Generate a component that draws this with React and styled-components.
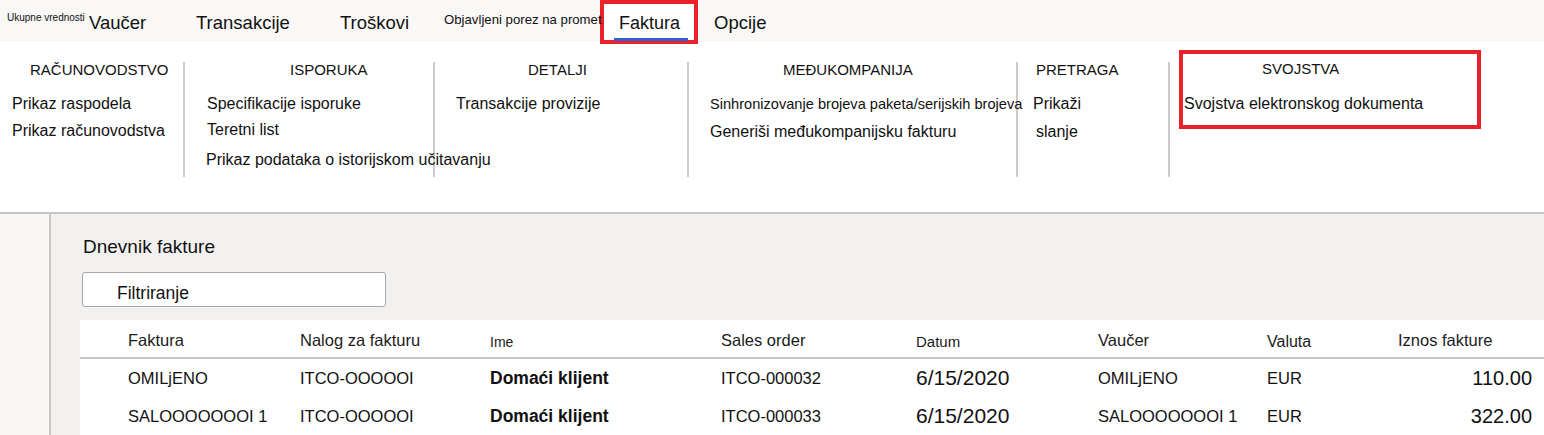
import React from 'react';
import styled, { createGlobalStyle } from 'styled-components';

const GlobalStyle = createGlobalStyle`
  html, body {
    margin: 0;
    padding: 0;
    background: #ffffff;
  }
  body {
    font-family: "Liberation Sans", Arial, sans-serif;
    color: #1b1b1b;
  }
`;

const Page = styled.div`
  width: 1544px;
  height: 435px;
  overflow: hidden;
  display: flex;
  flex-direction: column;
`;

// gornja traka sa karticama
const TabBar = styled.div`
  height: 42px;
  flex-shrink: 0;
  background: #f9f8f7;
  display: flex;
  align-items: flex-start;
  padding-left: 7px;
  position: relative;
  z-index: 2;
`;

const Tab = styled.div`
  width: ${p => p.$w}px;
  flex-shrink: 0;
  font-size: ${p => p.$size}px;
  line-height: ${p => p.$lh}px;
  padding-top: ${p => p.$top}px;
  white-space: nowrap;
  color: #111;
  position: relative;
  z-index: 1;
`;

const ActiveTab = styled.div`
  width: 98px;
  height: 44px;
  flex-shrink: 0;
  box-sizing: border-box;
  border: 4px solid #e8212b;
  background: #ffffff;
  margin-right: 16px;
`;

const ActiveLabel = styled.div`
  margin: 8px 6px 0 10px;
  padding: 0 0 4px 5px;
  font-size: 18px;
  line-height: 22px;
  color: #111;
  border-bottom: 3px solid #2f62d0;
`;

// ribbon sa grupama
const Ribbon = styled.div`
  height: 170px;
  flex-shrink: 0;
  background: #ffffff;
  border-bottom: 2px solid #c8c6c4;
  display: flex;
  align-items: flex-start;
`;

const Group = styled.div`
  width: ${p => p.$w}px;
  flex-shrink: 0;
  box-sizing: border-box;
  margin-top: 20px;
  height: 115px;
  border-right: 2px solid #cdcbc9;
  display: flex;
  flex-direction: column;
`;

const RedGroup = styled.div`
  width: 302px;
  height: 79px;
  box-sizing: border-box;
  margin: 8px 0 0 9px;
  padding-top: 7px;
  border: 4px solid #e8212b;
  display: flex;
  flex-direction: column;
`;

const GroupTitle = styled.div`
  font-size: 15px;
  line-height: 16px;
  padding-left: ${p => p.$x}px;
  color: #111;
  white-space: nowrap;
`;

const Action = styled.div`
  font-size: ${p => p.$size || 16}px;
  line-height: 24px;
  padding-left: ${p => p.$x}px;
  margin-top: ${p => p.$mt}px;
  color: #111;
  white-space: nowrap;
`;

// donji deo stranice
const Body = styled.div`
  flex: 1;
  display: flex;
  min-height: 0;
`;

const SidePanel = styled.div`
  width: 49px;
  flex-shrink: 0;
  background: #f8f7f6;
  border-right: 2px solid #c8c6c4;
`;

const Main = styled.div`
  flex: 1;
  background: #f2f1f0;
  padding: 23px 0 0 29px;
  display: flex;
  flex-direction: column;
  min-width: 0;
`;

const Title = styled.div`
  font-size: 19px;
  line-height: 20px;
  margin-left: 3px;
  color: #111;
`;

const Filter = styled.div`
  margin: 15px 0 0 2px;
  width: 304px;
  height: 35px;
  box-sizing: border-box;
  border: 1px solid #a8a8a8;
  border-radius: 3px;
  background: #ffffff;
  padding: 10px 0 0 34px;
  font-size: 17.5px;
  line-height: 20px;
  color: #111;
`;

const Grid = styled.div`
  flex: 1;
  margin-top: 13px;
  background: #ffffff;
`;

const columns = '48px 172px 190px 231px 195px 182px 169px 131px 1fr';

const HeadRow = styled.div`
  display: grid;
  grid-template-columns: ${columns};
  height: 37px;
  border-bottom: 2px solid #c8c6c4;
`;

const HeadCell = styled.div`
  font-size: ${p => p.$size || 16.5}px;
  line-height: 20px;
  padding-top: ${p => (p.$low ? 12 : 10)}px;
  color: #1b1b1b;
  white-space: nowrap;
`;

const Row = styled.div`
  display: grid;
  grid-template-columns: ${columns};
  height: 38px;
  align-items: center;
`;

const Cell = styled.div`
  font-size: ${p => p.$size || 16.5}px;
  font-weight: ${p => (p.$bold ? 700 : 400)};
  text-align: ${p => (p.$right ? 'right' : 'left')};
  padding-right: ${p => (p.$right ? 12 : 0)}px;
  color: #111;
  white-space: nowrap;
`;

const rows = [
  { faktura: 'OMILjENO', nalog: 'ITCO-OOOOOI', ime: 'Domaći klijent', so: 'ITCO-000032', datum: '6/15/2020', vaucer: 'OMILjENO', valuta: 'EUR', iznos: '110.00' },
  { faktura: 'SALOOOOOOOI 1', nalog: 'ITCO-OOOOOI', ime: 'Domaći klijent', so: 'ITCO-000033', datum: '6/15/2020', vaucer: 'SALOOOOOOOI 1', valuta: 'EUR', iznos: '322.00' },
];

export default function App() {
  return (
    <Page>
      <GlobalStyle />
      <TabBar>
        <Tab $w={82} $size={10} $lh={12} $top={12}>Ukupne vrednosti</Tab>
        <Tab $w={107} $size={18.5} $lh={22} $top={12}>Vaučer</Tab>
        <Tab $w={144} $size={18.5} $lh={22} $top={12}>Transakcije</Tab>
        <Tab $w={104} $size={18.5} $lh={22} $top={12}>Troškovi</Tab>
        <Tab $w={156} $size={13.2} $lh={16} $top={12}>Objavljeni porez na promet</Tab>
        <ActiveTab>
          <ActiveLabel>Faktura</ActiveLabel>
        </ActiveTab>
        <Tab $w={80} $size={18.5} $lh={22} $top={12}>Opcije</Tab>
      </TabBar>

      <Ribbon>
        <Group $w={185}>
          <GroupTitle $x={30}>RAČUNOVODSTVO</GroupTitle>
          <Action $x={12} $mt={14}>Prikaz raspodela</Action>
          <Action $x={12} $mt={3}>Prikaz računovodstva</Action>
        </Group>
        <Group $w={250}>
          <GroupTitle $x={105}>ISPORUKA</GroupTitle>
          <Action $x={22} $mt={14}>Specifikacije isporuke</Action>
          <Action $x={22} $mt={2}>Teretni list</Action>
          <Action $x={21} $mt={6}>Prikaz podataka o istorijskom učitavanju</Action>
        </Group>
        <Group $w={254}>
          <GroupTitle $x={93}>DETALJI</GroupTitle>
          <Action $x={21} $mt={14}>Transakcije provizije</Action>
        </Group>
        <Group $w={329}>
          <GroupTitle $x={94}>MEĐUKOMPANIJA</GroupTitle>
          <Action $x={21} $mt={14} $size={14.6}>Sinhronizovanje brojeva paketa/serijskih brojeva</Action>
          <Action $x={21} $mt={4}>Generiši međukompanijsku fakturu</Action>
        </Group>
        <Group $w={152}>
          <GroupTitle $x={18}>PRETRAGA</GroupTitle>
          <Action $x={15} $mt={14}>Prikaži</Action>
          <Action $x={18} $mt={4}>slanje</Action>
        </Group>
        <RedGroup>
          <GroupTitle $x={79}>SVOJSTVA</GroupTitle>
          <Action $x={1} $mt={15}>Svojstva elektronskog dokumenta</Action>
        </RedGroup>
      </Ribbon>

      <Body>
        <SidePanel />
        <Main>
          <Title>Dnevnik fakture</Title>
          <Filter>Filtriranje</Filter>
          <Grid>
            <HeadRow>
              <div />
              <HeadCell>Faktura</HeadCell>
              <HeadCell>Nalog za fakturu</HeadCell>
              <HeadCell $size={14} $low>Ime</HeadCell>
              <HeadCell>Sales order</HeadCell>
              <HeadCell $size={15} $low>Datum</HeadCell>
              <HeadCell>Vaučer</HeadCell>
              <HeadCell $size={16} $low>Valuta</HeadCell>
              <HeadCell>Iznos fakture</HeadCell>
            </HeadRow>
            {rows.map(r => (
              <Row key={r.faktura}>
                <div />
                <Cell>{r.faktura}</Cell>
                <Cell>{r.nalog}</Cell>
                <Cell $bold $size={17.5}>{r.ime}</Cell>
                <Cell>{r.so}</Cell>
                <Cell $size={21}>{r.datum}</Cell>
                <Cell>{r.vaucer}</Cell>
                <Cell>{r.valuta}</Cell>
                <Cell $size={20} $right>{r.iznos}</Cell>
              </Row>
            ))}
          </Grid>
        </Main>
      </Body>
    </Page>
  );
}
